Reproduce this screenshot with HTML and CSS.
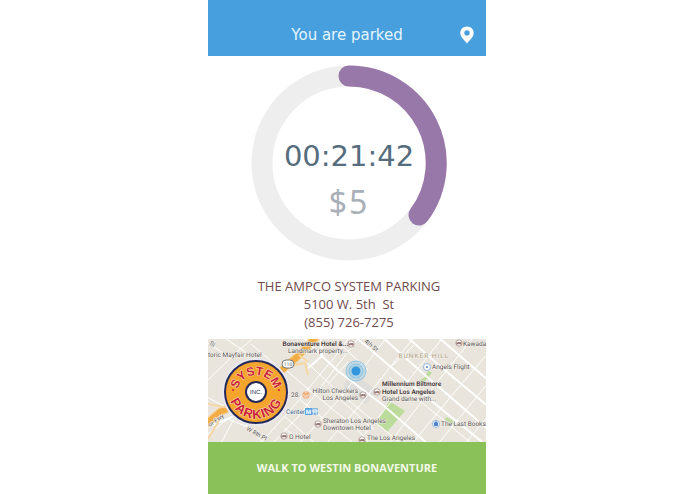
FILE: index.html
```html
<!DOCTYPE html>
<html lang="en">
<head>
<meta charset="utf-8">
<meta name="viewport" content="width=device-width, initial-scale=1">
<title>You are parked</title>
<link rel="stylesheet" href="styles.css">
</head>
<body>
<div class="screen">
  <header class="bar">
    <h1 class="bar-title">You are parked</h1>
    <button class="bar-pin" type="button" aria-label="Show location">
      <svg viewBox="0 0 14 18"><path fill-rule="evenodd" d="M7 0.5C3.2 0.5 0.3 3.3 0.3 7c0 4.2 4.2 7.2 6.7 10.6C9.500 14.200 13.700 11.200 13.700 7 13.700 3.300 10.800 0.500 7 0.500ZM7 4.200a2.700 2.700 0 1 1 0 5.400a2.700 2.700 0 0 1 0-5.400Z"/></svg>
    </button>
  </header>
  <main class="session">
    <div class="timer">
      <svg class="ring" viewBox="0 0 196 196" aria-hidden="true">
        <circle class="ring-track" cx="98" cy="98" r="87"/>
        <path class="ring-value" d="M98 11A87 87 0 0 1 168 150"/>
      </svg>
      <div class="reading">
        <p class="elapsed">00:21:42</p>
        <p class="cost">$5</p>
      </div>
    </div>
    <address class="garage">
      <span>THE AMPCO SYSTEM PARKING</span>
      <span>5100 W. 5th&nbsp; St</span>
      <span>(855) 726-7275</span>
    </address>
  </main>
  <svg class="map" viewBox="0 0 278 103" role="img" aria-label="Map of downtown Los Angeles">
    <defs>
      <path id="arc-top" d="M29 55A19 19 0 1 1 67 55"/>
      <path id="arc-bottom" d="M21 47A27.500 27.500 0 1 0 75 47"/>
      <g id="bed">
        <circle class="poi" r="3.200"/>
        <path class="poi-mark" d="M-2-1V1.500M-2 .7H2V1.500M-1-.3H2V.7"/>
      </g>
    </defs>
    <rect class="land" width="278" height="103"/>
    <path class="block" d="M139 39l12-1 19 14-12 13-23-14Z"/>
    <path class="park" d="M181 62l16 10-18 21-6-6-5-2Z M216 43l5-5 3-5-4-1-3 6-6 4Z M238 78l6 3 3 5-10-5Z"/>
    <g class="roads">
      <path class="minor" d="M-5 1 20 17 M0 41 30 12 49-4 M18 0 57 26 M43 5 76 33 M90 15 127 50 151 70 195 106 M78 31 100 50 149 90 163 106 M91 60 150 108 M76 77 109 106 M-3 57 25 72 57 106 M-4 98 20 80 42 89 M12 106 27 78 M51 106 85 68 130 14 142-3 M63 106 91 77 109 53 149 1 M76 89 90 100 M90 106 133 58 176 2 M117 106 153 65 207-3 M148 106 187 58 237-4 M180 106 218 57 268-5 M203 106 240 61 281 13 M229 106 281 43 M256 106 281 76"/>
      <path class="major" d="M94-3 114 17 130 32 175 66 221 106 M145-4 170 17 205 47 278 106 M173-3 210 30 254 68 284 94 M198-3 233 28 281 68 M229-3 281 42 M0 88 29 76 M113 0 114 17 100 29"/>
      <path class="minor" d="M130 3 160 31 M132 60 166 91 M121 44 140 23 M184 27 206 6 M181 38 217 66 268 108"/>
    </g>
    <path class="freeway-edge" d="M-3 86 12 73 32 64M67 37 89 18 109-3"/>
    <path class="freeway" d="M-3 86 12 73 32 64M67 37 89 18 109-3"/>
    <path class="ramp" d="M0 65 15 68 29 69M82 27 97 24 100 36M91 16 100 23M0 100 12 80"/>
    <g class="labels" transform="scale(.5)">
      <text x="0" y="36">toric Mayfair Hotel</text>
      <text class="strong" x="149" y="14">Bonaventure Hotel &amp;...</text>
      <text x="160" y="28">Landmark property...</text>
      <text x="166" y="116">28.</text>
      <text x="209" y="108">Hilton Checkers</text>
      <text x="229" y="122">Los Angeles</text>
      <text class="transit" x="156" y="149">Center</text>
      <text x="230" y="168">Sheraton Los Angeles</text>
      <text x="230" y="182">Downtown Hotel</text>
      <text x="162" y="200">O Hotel</text>
      <text x="318" y="202">The Los Angeles</text>
      <text class="strong" x="348" y="94">Millennium Biltmore</text>
      <text class="strong" x="348" y="110">Hotel Los Angeles</text>
      <text x="348" y="124">Grand dame with...</text>
      <text x="448" y="60">Angels Flight</text>
      <text x="510" y="13">Kawada</text>
      <text x="466" y="174">The Last Bookst</text>
      <text class="district" x="381" y="38">BUNKER HILL</text>
      <text class="street" transform="translate(312 6) rotate(39)">4th St</text>
      <text class="street" transform="translate(76 182) rotate(29)">W 8th Pl</text>
      <text class="street" transform="translate(4 176) rotate(-35)">or Fwy</text>
      <text class="street" transform="translate(2 10) rotate(35)">St</text>
    </g>
    <rect class="shield" x="74" y="21" width="12" height="8" rx="4"/>
    <text class="shield-text" x="80" y="27">110</text>
    <use href="#bed" x="143" y="5"/>
    <use href="#bed" x="251" y="4"/>
    <use href="#bed" x="155" y="56"/>
    <use href="#bed" x="169" y="53"/>
    <use href="#bed" x="110" y="85"/>
    <use href="#bed" x="76" y="97"/>
    <use href="#bed" x="154" y="101"/>
    <circle class="poi food" cx="98" cy="56" r="3.200"/>
    <path class="food" d="M97 54V58M99 54V58M96 55H100"/>
    <circle class="poi sight" cx="219" cy="28" r="3.500"/>
    <circle class="sight-dot" cx="219" cy="28" r="1"/>
    <circle class="poi sight" cx="228" cy="85" r="3.500"/>
    <path class="sight-dot" d="M226 87V84L228 82 230 84V87Z"/>
    <rect class="metro" x="97" y="69" width="7" height="7"/>
    <text class="metro-text" x="100.500" y="75">M</text>
    <rect class="bus" x="104" y="69" width="6" height="7" rx="1"/>
    <path class="bus-mark" d="M105 71H109V73H105ZM105 75H106M108 75H109"/>
    <circle class="halo" cx="148" cy="32" r="10"/>
    <circle class="halo" cx="148" cy="32" r="7"/>
    <circle class="here" cx="148" cy="32" r="4.500"/>
    <circle class="logo-rim" cx="48" cy="53" r="34"/>
    <circle class="logo-disc" cx="48" cy="53" r="31"/>
    <circle class="logo-hub" cx="48" cy="53" r="10"/>
    <text class="logo-word"><textPath href="#arc-top" startOffset="50%">SYSTEM</textPath></text>
    <text class="logo-word wide"><textPath href="#arc-bottom" startOffset="50%">PARKING</textPath></text>
    <circle class="logo-dot" cx="25" cy="51" r="1"/>
    <circle class="logo-dot" cx="71" cy="51" r="1"/>
    <text class="logo-inc" x="48" y="55">INC.</text>
  </svg>
  <button class="walk" type="button">WALK TO WESTIN BONAVENTURE</button>
</div>
</body>
</html>
```
FILE: styles.css
```css
* { box-sizing: border-box; }

body {
  margin: 0;
  min-height: 100vh;
  display: flex;
  justify-content: center;
  padding-right: 1px;
  background: #fff;
  font-family: "Open Sans", "Noto Sans", sans-serif;
}

.screen {
  width: 100%;
  max-width: 278px;
  min-height: 100vh;
  display: flex;
  flex-direction: column;
}

h1, p { margin: 0; font-weight: 400; }

button {
  border: 0;
  padding: 0;
  background: none;
  font: inherit;
  color: inherit;
  cursor: pointer;
}

.bar {
  display: grid;
  grid-template-columns: 1fr auto 1fr;
  align-items: center;
  padding: 24px 12px 10px;
  background: #489fdd;
  color: #e4f6ff;
}

.bar-title {
  grid-column: 2;
  font-family: "DejaVu Sans", sans-serif;
  font-size: 15px;
  line-height: 22px;
}

.bar-pin { justify-self: end; display: flex; }
.bar-pin svg { width: 14px; height: 18px; fill: #fff; }

.session {
  flex: 1;
  display: flex;
  flex-direction: column;
  align-items: center;
  gap: 16px;
  padding: 9px 0 8px 4px;
}

.timer { display: grid; place-items: center; }
.timer > * { grid-area: 1 / 1; }

.ring { width: 196px; height: 196px; fill: none; stroke-width: 21px; }
.ring-track { stroke: #eee; }
.ring-value { stroke: #9877a9; stroke-linecap: round; }

.reading {
  display: flex;
  flex-direction: column;
  gap: 10px;
  padding-top: 32px;
  text-align: center;
  font-family: "DejaVu Sans", sans-serif;
  line-height: 36px;
}

.elapsed { font-size: 29px; color: #566d7e; }
.cost {
  font-family: "Noto Sans", sans-serif;
  font-size: 32px;
  letter-spacing: 2px;
  color: #a9b0b8;
}

.garage {
  display: flex;
  flex-direction: column;
  align-items: center;
  font-style: normal;
  font-size: 13px;
  line-height: 18px;
  color: #704a4c;
}

.map {
  display: block;
  width: 100%;
  height: auto;
  font-family: Roboto, sans-serif;
  text-rendering: geometricPrecision;
}
.land { fill: #e9e5dc; }
.block { fill: #deddda; }
.park { fill: #bcdc9b; }
.roads { fill: none; stroke: #fff; }
.minor { stroke-width: 1px; }
.major { stroke-width: 2px; }
.freeway-edge { fill: none; stroke: #f5cf8a; stroke-width: 8px; }
.freeway { fill: none; stroke: #f3ad45; stroke-width: 6px; }
.ramp { fill: none; stroke: #f5d7a3; stroke-width: 2px; }

/* Labels are drawn at twice the map scale. */
.labels {
  font-size: 13px;
  fill: #5c5957;
  stroke: #f4f1ec;
  stroke-width: 2px;
  paint-order: stroke;
}
.strong { font-weight: 700; fill: #4b3f3f; }
.transit { fill: #3f6b91; }
.district { fill: #aea283; letter-spacing: 2px; }
.street { font-size: 12px; }

.shield { fill: #fff; stroke: #777; stroke-width: 1px; }
.shield-text { font-size: 5px; text-anchor: middle; fill: #555; }
.poi { fill: #fff; stroke: #b4a09b; stroke-width: 1px; }
.poi-mark { fill: none; stroke: #8c6661; stroke-width: 1px; }
.food { stroke: #ec9a59; }
.sight { stroke: #91b4da; }
.sight-dot { fill: #4b84c9; }
.metro, .bus { fill: #56a5e2; }
.bus { opacity: 0.7; }
.metro-text { font-size: 6px; font-weight: 700; text-anchor: middle; fill: #fff; }
.bus-mark { fill: none; stroke: #fff; }
.halo { fill: #70bce8; fill-opacity: 0.3; stroke: #8ec5e4; stroke-width: 1px; }
.here { fill: #3496dc; }

.logo-rim { fill: #e9e9f1; }
.logo-disc { fill: #f6a52c; stroke: #252959; stroke-width: 2px; }
.logo-hub { fill: #fff; stroke: #252959; stroke-width: 2px; }
.logo-word {
  font-family: "Liberation Sans", sans-serif;
  font-size: 12px;
  font-weight: 700;
  text-anchor: middle;
  fill: #c91f3a;
  stroke: #fbdcb4;
  stroke-width: 1px;
  paint-order: stroke;
}
.wide { font-size: 13px; letter-spacing: 1px; }
.logo-dot { fill: #c91f3a; }
.logo-inc {
  font-family: "Liberation Sans", sans-serif;
  font-size: 6px;
  text-anchor: middle;
  fill: #252959;
}

.walk {
  padding: 16px 0;
  background: #8bc159;
  color: #f3fae9;
  font-size: 11px;
  font-weight: 700;
  line-height: 20px;
}
```
